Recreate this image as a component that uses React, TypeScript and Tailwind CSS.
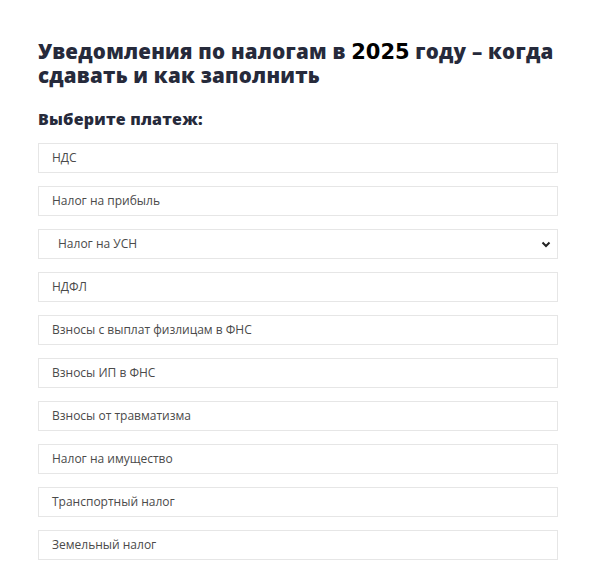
import React from 'react'

const payments = [
  'НДС',
  'Налог на прибыль',
  'Налог на УСН',
  'НДФЛ',
  'Взносы с выплат физлицам в ФНС',
  'Взносы ИП в ФНС',
  'Взносы от травматизма',
  'Налог на имущество',
  'Транспортный налог',
  'Земельный налог',
]

export default function App() {
  return (
    <div className="min-h-screen bg-white px-[38px] pt-[39px] font-['Open_Sans',sans-serif]">
      <h1 className="text-[20.5px] leading-[24px] font-extrabold text-[#262a3b] tracking-[0.25px]">
        Уведомления по налогам в{' '}
        <span className="font-['DejaVu_Sans',sans-serif] font-bold text-black text-[21px] leading-none tracking-normal">2025</span>{' '}
        году – когда сдавать и как заполнить
      </h1>

      <h2 className="mt-[22px] text-[16px] leading-[20px] font-extrabold text-[#262a3b] tracking-[0.2px]">Выберите платеж:</h2>

      <div className="mt-[14px] w-[520px] flex flex-col gap-[13px]">
        {payments.map((p) =>
          p === 'Налог на УСН' ? (
            <div key={p} className="h-[30px] border border-[#e6e6e6] flex items-center justify-between pl-[19px] pr-[5px]">
              <span className="text-[12px] text-[#4a4a4a]">{p}</span>
              <svg width="12" height="12" viewBox="0 0 12 12">
                <path d="M2.5 4.5 L6 8 L9.5 4.5" fill="none" stroke="#222" strokeWidth="2" />
              </svg>
            </div>
          ) : (
            <div key={p} className="h-[30px] border border-[#e6e6e6] flex items-center pl-[13px]">
              <span className="text-[12px] text-[#4a4a4a]">{p}</span>
            </div>
          )
        )}
      </div>
    </div>
  )
}
